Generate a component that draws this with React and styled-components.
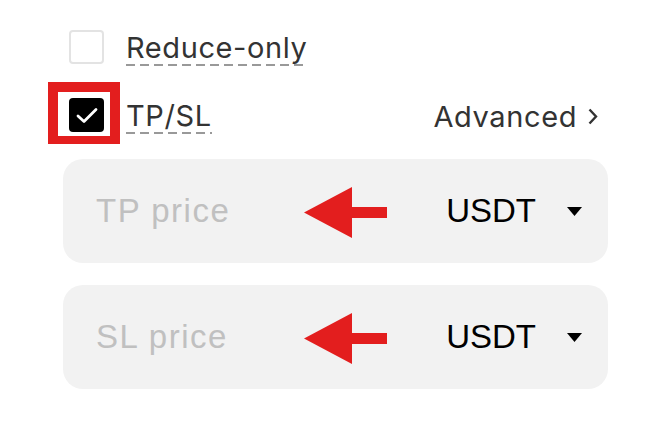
import React from "react";
import styled, { createGlobalStyle } from "styled-components";

const Global = createGlobalStyle`
  html, body { margin: 0; padding: 0; background: #fff; }
  body { width: 648px; height: 425px; overflow: hidden; }
`;

const Page = styled.div`
  box-sizing: border-box;
  width: 648px;
  height: 425px;
  padding: 30px 40px 0 63px;
  display: flex;
  flex-direction: column;
`;

const OptionRow = styled.div`
  display: flex;
  align-items: center;
  padding-left: 6px;
  height: 34px;
  margin-bottom: ${(p) => p.$mb || 0}px;
`;

const BoxWrap = styled.span`
  position: relative;
  display: inline-flex;
  flex: none;
`;

const Check = styled.span`
  box-sizing: border-box;
  width: 35px;
  height: 34px;
  border-radius: 4px;
  border: ${(p) => (p.$checked ? "none" : "2px solid #e3e3e3")};
  background: ${(p) => (p.$checked ? "#000" : "#fff")};
  display: flex;
  align-items: center;
  justify-content: center;
`;

const Highlight = styled.span`
  position: absolute;
  left: -21px;
  top: -16px;
  width: 72px;
  height: 62px;
  box-sizing: border-box;
  border: 10px solid #e31e1e;
  border-bottom-width: 8px;
  pointer-events: none;
`;

const Label = styled.span`
  margin-left: 22px;
  font-family: Inter, "Noto Sans", sans-serif;
  font-size: 29px;
  letter-spacing: 0.6px;
  color: #333;
  line-height: 34px;
  position: relative;
  top: 1px;
  padding-bottom: 1px;
  background-image: linear-gradient(to right, #999 0 9px, transparent 9px 14px);
  background-size: 14px 1.5px;
  background-repeat: repeat-x;
  background-position: 0 100%;
`;

const Spacer = styled.span`
  flex: 1;
`;

const AdvancedLink = styled.span`
  display: flex;
  align-items: center;
  gap: 11px;
  font-family: Inter, "Noto Sans", sans-serif;
  font-size: 29px;
  letter-spacing: 0.6px;
  color: #333;
  margin-right: 10px;
  position: relative;
  top: 1px;
`;

const PriceField = styled.div`
  position: relative;
  box-sizing: border-box;
  width: 545px;
  height: 104px;
  border-radius: 20px;
  background: #f2f2f2;
  display: flex;
  align-items: center;
  padding: 0 26px 0 33px;
  margin-bottom: 22px;
`;

const Placeholder = styled.span`
  font-family: "Liberation Sans", Arial, sans-serif;
  font-size: 33px;
  color: #c0c0c0;
  flex: 1;
  letter-spacing: 1.5px;
`;

const Unit = styled.span`
  display: flex;
  align-items: center;
  gap: 31px;
  font-family: "Liberation Sans", Arial, sans-serif;
  font-size: 33px;
  color: #000;
`;

const Arrow = styled.svg`
  position: absolute;
  left: 241px;
  top: 28px;
`;

const Caret = () => (
  <svg width="15" height="9" viewBox="0 0 15 9">
    <path d="M0 0 H15 L7.5 9 Z" fill="#000" />
  </svg>
);

const RedArrow = () => (
  <Arrow width="84" height="51" viewBox="0 0 84 51">
    <path d="M0 25.5 L48 0 V20 H83 V31 H48 V51 Z" fill="#e31e1e" />
  </Arrow>
);

const Field = ({ placeholder }) => (
  <PriceField>
    <Placeholder>{placeholder}</Placeholder>
    <RedArrow />
    <Unit>
      USDT
      <Caret />
    </Unit>
  </PriceField>
);

export default function App() {
  return (
    <>
      <Global />
      <Page>
        <OptionRow $mb={34}>
          <BoxWrap>
            <Check />
          </BoxWrap>
          <Label>Reduce-only</Label>
        </OptionRow>
        <OptionRow $mb={27}>
          <BoxWrap>
            <Check $checked>
              <svg width="22" height="17" viewBox="0 0 22 17">
                <path d="M2 9 L8 14.5 L20 2.5" fill="none" stroke="#fff" strokeWidth="2.8" strokeLinecap="round" strokeLinejoin="round" />
              </svg>
            </Check>
            <Highlight />
          </BoxWrap>
          <Label>TP/SL</Label>
          <Spacer />
          <AdvancedLink>
            Advanced
            <svg width="10" height="17" viewBox="0 0 10 17">
              <path d="M1.5 1.5 L8 8.5 L1.5 15.5" fill="none" stroke="#333" strokeWidth="2.4" />
            </svg>
          </AdvancedLink>
        </OptionRow>
        <Field placeholder="TP price" />
        <Field placeholder="SL price" />
      </Page>
    </>
  );
}
